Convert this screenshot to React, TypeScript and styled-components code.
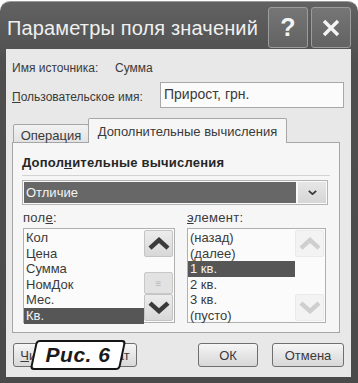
import React from "react";
import styled, { createGlobalStyle } from "styled-components";

const GlobalStyle = createGlobalStyle`
  html, body {
    margin: 0;
    padding: 0;
    background: #ffffff;
  }
  body {
    font-family: "Liberation Sans", Arial, sans-serif;
    color: #3a3a3a;
  }
`;

const leftItems = ["Кол", "Цена", "Сумма", "НомДок", "Мес.", "Кв."];
const rightItems = ["(назад)", "(далее)", "1 кв.", "2 кв.", "3 кв.", "(пусто)"];

function Chevron({ up, dim, size = 22 }: { up?: boolean; dim?: boolean; size?: number }) {
  return (
    <svg width={size} height={size * 0.6} viewBox="0 0 22 13">
      <polyline
        points={up ? "2,11 11,3 20,11" : "2,2 11,10 20,2"}
        fill="none"
        stroke={dim ? "#cfcfcf" : "#3a3a3a"}
        strokeWidth={4.5}
        strokeLinejoin="miter"
      />
    </svg>
  );
}

function ListBox({ items, selected, active, width }:
  { items: string[], selected: number, active: boolean, width: number }) {
  return (
    <List style={{ width }}>
      <Rows>
        {items.map((item, i) => (
          <Row key={item} $selected={i === selected}>{item}</Row>
        ))}
      </Rows>
      <ScrollBar>
        <ScrollButton $dim={!active}>
          <Chevron up dim={!active} />
        </ScrollButton>
        <Track>
          {active && <Thumb>≡</Thumb>}
        </Track>
        <ScrollButton $dim={!active}>
          <Chevron dim={!active} />
        </ScrollButton>
      </ScrollBar>
    </List>
  );
}

export default function App() {
  return (
    <>
      <GlobalStyle />
      <Window>
        <TitleBar>
          <Title>Параметры поля значений</Title>
          <CaptionButtons>
            <CaptionButton>?</CaptionButton>
            <CaptionButton>
              <svg width="20" height="20" viewBox="0 0 20 20">
                <path d="M3 3 L17 17 M17 3 L3 17" stroke="#f4f4f4" strokeWidth="3.4" />
              </svg>
            </CaptionButton>
          </CaptionButtons>
        </TitleBar>

        <Content>
          <InfoRow>
            <Label>Имя источника:</Label>
            <SourceValue>Сумма</SourceValue>
          </InfoRow>
          <InputRow>
            <Label><u>П</u>ользовательское имя:</Label>
            <TextInput>Прирост, грн.</TextInput>
          </InputRow>

          <TabStrip>
            <Tab $width={76}>Операция</Tab>
            <Tab $width={199} $active>Дополнительные вычисления</Tab>
          </TabStrip>
          <Panel>
            <Heading>Допол<u>н</u>ительные вычисления</Heading>
            <Separator />
            <Select>
              <SelectValue>Отличие</SelectValue>
              <SelectArrow>
                <Chevron size={9} />
              </SelectArrow>
            </Select>
            <Columns>
              <Column>
                <ColumnLabel>пол<u>е</u>:</ColumnLabel>
                <ListBox items={leftItems} selected={5} active width={152} />
              </Column>
              <Column>
                <ColumnLabel><u>э</u>лемент:</ColumnLabel>
                <ListBox items={rightItems} selected={2} active={false} width={139} />
              </Column>
            </Columns>
          </Panel>

          <ButtonRow>
            <Button $width={124}><u>Ч</u>исловой формат</Button>
            <Spacer />
            <Button $width={60}>ОК</Button>
            <Button $width={72}>Отмена</Button>
          </ButtonRow>
        </Content>

        <FigureTag>
          <FigureText>Рис. 6</FigureText>
        </FigureTag>
      </Window>
    </>
  );
}

const Window = styled.div`
  position: relative;
  width: 358px;
  height: 383px;
  box-sizing: border-box;
  display: flex;
  flex-direction: column;
  background: linear-gradient(#626262, #4f4f4f 60px, #4a4a4a);
  border-radius: 10px 10px 0 0;
  border-top: 1px solid #9a9a9a;
  margin-top: 1px;
  padding: 0 7px 7px 6px;
`;

const TitleBar = styled.div`
  height: 47px;
  box-sizing: border-box;
  display: flex;
  align-items: center;
  padding: 5px 0 1px 1px;
`;

const Title = styled.div`
  flex: 1;
  font-size: 20px;
  color: #f0f0f0;
  letter-spacing: 0.15px;
  padding-top: 2px;
`;

const CaptionButtons = styled.div`
  display: flex;
  gap: 3px;
  align-self: stretch;
`;

const CaptionButton = styled.div`
  width: 40px;
  box-sizing: border-box;
  border: 1px solid #9c9c9c;
  border-radius: 3px;
  background: linear-gradient(#767676, #626262);
  display: flex;
  align-items: center;
  justify-content: center;
  color: #f4f4f4;
  font-size: 25px;
  font-weight: bold;
`;

const Content = styled.div`
  flex: 1;
  display: flex;
  flex-direction: column;
  background: #e8e8e8;
  padding: 0 7px 0 6px;
  font-size: 12px;
`;

const InfoRow = styled.div`
  display: flex;
  align-items: center;
  height: 16px;
  margin-top: 11px;
`;

const Label = styled.div`
  width: 103px;
  flex-shrink: 0;
  white-space: nowrap;
`;

const SourceValue = styled.div``;

const InputRow = styled.div`
  display: flex;
  align-items: center;
  margin-top: 6px;
  & > ${Label} {
    width: 148px;
    padding-top: 3px;
  }
`;

const TextInput = styled.div`
  flex: 1;
  height: 26px;
  box-sizing: border-box;
  border: 1px solid #a8a8a8;
  background: #fbfbfb;
  padding: 3px 3px;
  font-size: 14px;
`;

const TabStrip = styled.div`
  display: flex;
  align-items: flex-end;
  margin-top: 10px;
  margin-left: 1px;
  height: 25px;
  position: relative;
  z-index: 1;
  margin-bottom: -1px;
`;

const Tab = styled.div<{ $width: number; $active?: boolean }>`
  width: ${p => p.$width}px;
  height: ${p => (p.$active ? 25 : 19)}px;
  box-sizing: border-box;
  border: 1px solid #a6a6a6;
  border-bottom: ${p => (p.$active ? "none" : "1px solid #a6a6a6")};
  border-radius: 2px 2px 0 0;
  background: ${p => (p.$active ? "#f6f6f6" : "linear-gradient(#f2f2f2, #e2e2e2)")};
  font-size: 13px;
  display: flex;
  align-items: center;
  justify-content: center;
  padding-top: ${p => (p.$active ? 0 : 3)}px;
  ${p => p.$active ? "margin-left: -1px;" : ""}
`;

const Panel = styled.div`
  width: 328px;
  height: 191px;
  box-sizing: border-box;
  border: 1px solid #a6a6a6;
  background: #f6f6f6;
  padding: 12px 0 0 9px;
  display: flex;
  flex-direction: column;
`;

const Heading = styled.div`
  font-size: 13px;
  font-weight: bold;
  color: #262626;
  height: 17px;
  letter-spacing: 0.2px;
`;

const Separator = styled.div`
  width: 308px;
  height: 1px;
  background: #d2d2d2;
  margin-top: 3px;
`;

const Select = styled.div`
  width: 306px;
  height: 25px;
  margin-top: 4px;
  box-sizing: border-box;
  border: 1px solid #b4b4b4;
  display: flex;
  background: #fafafa;
  padding: 1px;
  gap: 2px;
`;

const SelectValue = styled.div`
  flex: 1;
  background: #676767;
  color: #f4f4f4;
  font-size: 13px;
  display: flex;
  align-items: center;
  padding-left: 2px;
`;

const SelectArrow = styled.div`
  width: 28px;
  background: linear-gradient(#e6e6e6, #d6d6d6);
  display: flex;
  align-items: center;
  justify-content: center;
`;

const Columns = styled.div`
  display: flex;
  gap: 12px;
  margin-top: 5px;
  padding-left: 1px;
`;

const Column = styled.div`
  display: flex;
  flex-direction: column;
`;

const ColumnLabel = styled.div`
  font-size: 13px;
  height: 18px;
  letter-spacing: 0.3px;
`;

const List = styled.div`
  height: 95px;
  box-sizing: border-box;
  border: 1px solid #b0b0b0;
  background: #fbfbfb;
  display: flex;
`;

const Rows = styled.div`
  flex: 1;
  display: flex;
  flex-direction: column;
  padding-top: 1px;
`;

const Row = styled.div<{ $selected: boolean }>`
  height: 15.6px;
  line-height: 15.6px;
  font-size: 13px;
  padding-left: 2px;
  background: ${p => (p.$selected ? "#565656" : "transparent")};
  color: ${p => (p.$selected ? "#f2f2f2" : "#3a3a3a")};
`;

const ScrollBar = styled.div`
  width: 29px;
  display: flex;
  flex-direction: column;
  padding: 1px 1px 1px 0;
`;

const ScrollButton = styled.div<{ $dim: boolean }>`
  height: 27px;
  box-sizing: border-box;
  border: 1px solid ${p => (p.$dim ? "#eaeaea" : "#c4c4c4")};
  border-radius: 2px;
  background: ${p => (p.$dim ? "#f3f3f3" : "linear-gradient(#ececec, #d8d8d8)")};
  display: flex;
  align-items: center;
  justify-content: center;
`;

const Track = styled.div`
  flex: 1;
  display: flex;
  flex-direction: column;
  justify-content: flex-end;
`;

const Thumb = styled.div`
  height: 22px;
  box-sizing: border-box;
  border: 1px solid #c8c8c8;
  border-radius: 2px;
  background: #e2e2e2;
  color: #b8b8b8;
  font-size: 10px;
  display: flex;
  align-items: center;
  justify-content: center;
`;

const ButtonRow = styled.div`
  display: flex;
  gap: 14px;
  margin-top: 10px;
  padding-left: 1px;
`;

const Spacer = styled.div`
  flex: 1;
`;

const Button = styled.div<{ $width: number }>`
  width: ${p => p.$width}px;
  height: 24px;
  box-sizing: border-box;
  border: 1px solid #6f6f6f;
  border-radius: 3px;
  background: linear-gradient(#f6f6f6, #e6e6e6 50%, #d8d8d8);
  font-size: 13px;
  display: flex;
  align-items: center;
  justify-content: center;
  white-space: nowrap;
  overflow: hidden;
`;

const FigureTag = styled.div`
  position: absolute;
  left: 33px;
  top: 338px;
  width: 90px;
  height: 30px;
  display: flex;
  align-items: center;
  justify-content: center;

  &::before {
    content: "";
    position: absolute;
    inset: 0;
    background: #ffffff;
    border: 2px solid #151515;
    border-radius: 4px;
    transform: skewX(-12deg);
  }
`;

const FigureText = styled.span`
  position: relative;
  font-family: "Liberation Sans", Arial, sans-serif;
  font-size: 21px;
  font-weight: bold;
  font-style: italic;
  color: #1a1a1a;
  letter-spacing: 0.5px;
`;
